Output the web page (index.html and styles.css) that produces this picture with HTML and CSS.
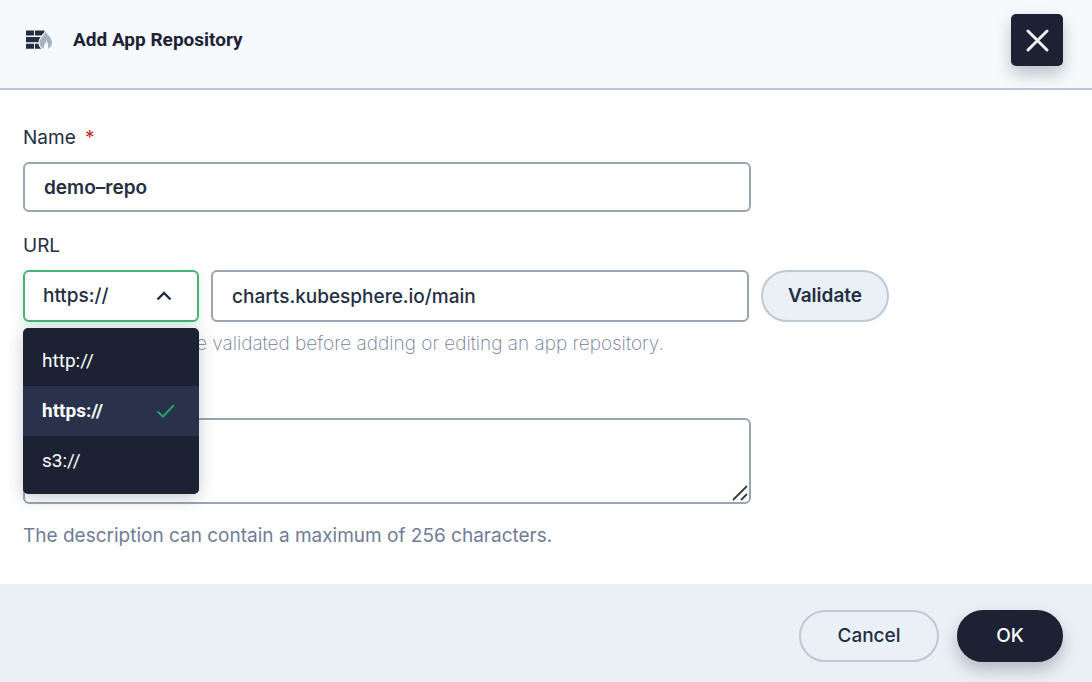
FILE: index.html
```html
<!DOCTYPE html>
<html lang="en">
<head>
<meta charset="utf-8">
<meta name="viewport" content="width=device-width, initial-scale=1">
<title>Add App Repository</title>
<link rel="stylesheet" href="styles.css">
</head>
<body>
<form class="dialog">
  <header class="dialog-header">
    <svg class="logo" width="29" height="20" viewBox="0 0 29 20" aria-hidden="true">
      <path fill="#242e42" d="M2 .5h8v5H2zM11 .5h9.500c0 2-1.500 3.500-3 5H11zM2 7h14.500c-1 1.500-1.800 3-2 5.200H2zM2 13.700h8v5H2zM11 13.700h3.500c.3 2 1.200 3.600 2.800 5H11z"/>
      <path fill="#a4b3c2" d="M21.500.8c.4 1.700 1.200 2.800 2.300 4 2.400 2.600 4.200 4.600 4.200 7.700 0 2.900-1.500 5.200-4 6.300.5-2.800.2-5.600-1.700-8.500-.2 2-.9 3-1.700 4.200-.8 1.300-1 2.600-.7 4.300-2.800-1-4.400-3.300-4.400-6 0-3 1.500-4.700 3.100-6.400C20 4.900 21.200 3.200 21.500.8z"/>
    </svg>
    <h1 class="title">Add App Repository</h1>
    <button class="close" type="button" aria-label="Close">
      <svg width="24" height="24" viewBox="0 0 24 24" aria-hidden="true"><path d="M3 3l19 19M22 3L3 22" fill="none" stroke="#f0f0f0" stroke-width="3" stroke-linecap="round"/></svg>
    </button>
  </header>

  <main class="dialog-body">
    <div class="field">
      <label class="label" for="name">Name <span class="required">*</span></label>
      <input class="control" id="name" type="text" value="demo&#8211;repo">
    </div>

    <div class="field">
      <label class="label" for="url">URL</label>
      <div class="url-row">
        <div class="scheme">
          <select class="control scheme-select" aria-label="URL scheme">
            <option>http://</option>
            <option selected>https://</option>
            <option>s3://</option>
          </select>
          <svg class="chevron" width="16" height="12" viewBox="0 0 16 12" aria-hidden="true"><path d="M1.500 9.500L8 3l6.500 6.500" fill="none" stroke="#242e42" stroke-width="2.400"/></svg>
          <div class="menu" role="listbox" aria-label="URL scheme">
            <button class="option" type="button" role="option">http://</button>
            <button class="option selected" type="button" role="option" aria-selected="true">https://
              <svg width="20" height="16" viewBox="0 0 20 16" aria-hidden="true"><path d="M1.500 8.500l5.500 5L18 2" fill="none" stroke="#1fa565" stroke-width="2"/></svg>
            </button>
            <button class="option" type="button" role="option">s3://</button>
          </div>
        </div>
        <input class="control url-input" id="url" type="text" value="charts.kubesphere.io/main">
        <button class="button validate" type="button">Validate</button>
      </div>
      <p class="hint light">The URL needs to be validated before adding or editing an app repository.</p>
    </div>

    <div class="field">
      <label class="label" for="description">Description</label>
      <div class="area">
        <textarea class="control textarea" id="description"></textarea>
        <svg class="grip" width="16" height="16" viewBox="0 0 16 16" aria-hidden="true"><path d="M1 15L15 1M9 15l6-6" fill="none" stroke="#3c3c3c" stroke-width="1.800"/></svg>
      </div>
      <p class="hint">The description can contain a maximum of 256 characters.</p>
    </div>
  </main>

  <footer class="dialog-footer">
    <button class="button cancel" type="button">Cancel</button>
    <button class="button ok" type="submit">OK</button>
  </footer>
</form>
</body>
</html>
```
FILE: styles.css
```css
* { box-sizing: border-box; }

body {
  margin: 0;
  background: #fff;
  color: #242e42;
  font-family: Inter, "Liberation Sans", sans-serif;
  font-size: 19px;
  line-height: 24px;
}

button, input, select, textarea { font: inherit; color: inherit; }
button { cursor: pointer; }

.dialog {
  min-height: 100vh;
  display: flex;
  flex-direction: column;
}

.dialog-header {
  display: flex;
  align-items: flex-start;
  padding: 14px 29px 22px 24px;
  background: #f6fafd;
  border-bottom: 2px solid #bcc8d6;
}
.logo { margin-top: 16px; }
.title {
  flex: 1;
  margin: 14px 0 0 20px;
  font-family: Roboto, sans-serif;
  font-size: 19px;
  font-weight: 700;
  line-height: 24px;
  color: #1c2233;
}
.close {
  display: grid;
  place-items: center;
  width: 52px;
  height: 52px;
  padding: 0;
  border: 0;
  border-radius: 5px;
  background: #1c2233;
  box-shadow: 0 8px 16px rgba(36, 46, 66, 0.28);
}

.dialog-body {
  flex: 1;
  display: flex;
  flex-direction: column;
  gap: 22px;
  padding: 36px 23px;
}
.label { display: block; margin-bottom: 12px; }
.required { margin-left: 4px; color: #ca2621; }

.control {
  display: block;
  width: 100%;
  max-width: 728px;
  height: 50px;
  margin: 0;
  padding: 0 19px;
  border: 2px solid #9aa5b3;
  border-radius: 6px;
  background: #fff;
  font-weight: 600;
  outline: 0;
}

.url-row {
  display: flex;
  gap: 12px;
  max-width: 866px;
}
.url-row .control { height: 52px; font-weight: 500; }
.scheme { position: relative; flex: 0 0 176px; }
.scheme-select {
  appearance: none;
  padding: 0 18px;
  border-color: #48b277;
  box-shadow: 0 4px 12px rgba(85, 188, 138, 0.25);
}
.url-input { flex: 1; min-width: 0; }
.chevron {
  position: absolute;
  top: 20px;
  right: 27px;
  pointer-events: none;
}

.menu {
  position: absolute;
  z-index: 1;
  top: 58px;
  left: 0;
  width: 100%;
  padding: 8px 0;
  border-radius: 5px;
  background: #1c2233;
  box-shadow: 0 4px 16px rgba(36, 46, 66, 0.25);
}
.option {
  display: flex;
  align-items: center;
  justify-content: space-between;
  width: 100%;
  height: 50px;
  padding: 0 23px 0 19px;
  border: 0;
  background: transparent;
  color: #fff;
  font-family: Roboto, sans-serif;
}
.option.selected { background: #29324a; font-weight: 700; }

.button {
  height: 52px;
  padding: 0 24px;
  border: 2px solid #c0c8d4;
  border-radius: 26px;
  background: #ebf0f6;
  font-weight: 500;
}
.validate { flex: 0 0 128px; font-weight: 600; }

.hint { margin: 10px 0 0; color: #6f7c95; }
.light { margin-bottom: 4px; font-weight: 200; }

.area { position: relative; max-width: 728px; margin-bottom: 20px; }
.textarea { height: 86px; padding: 12px 19px; resize: none; }
.grip {
  position: absolute;
  right: 3px;
  bottom: 3px;
  pointer-events: none;
}

.dialog-footer {
  display: flex;
  justify-content: flex-end;
  gap: 18px;
  padding: 26px 29px 20px;
  background: #ebf0f6;
}
.cancel { width: 140px; }
.ok {
  width: 106px;
  border-color: #1c2233;
  background: #1c2233;
  color: #fff;
  box-shadow: 0 8px 16px rgba(36, 46, 66, 0.28);
}
```
